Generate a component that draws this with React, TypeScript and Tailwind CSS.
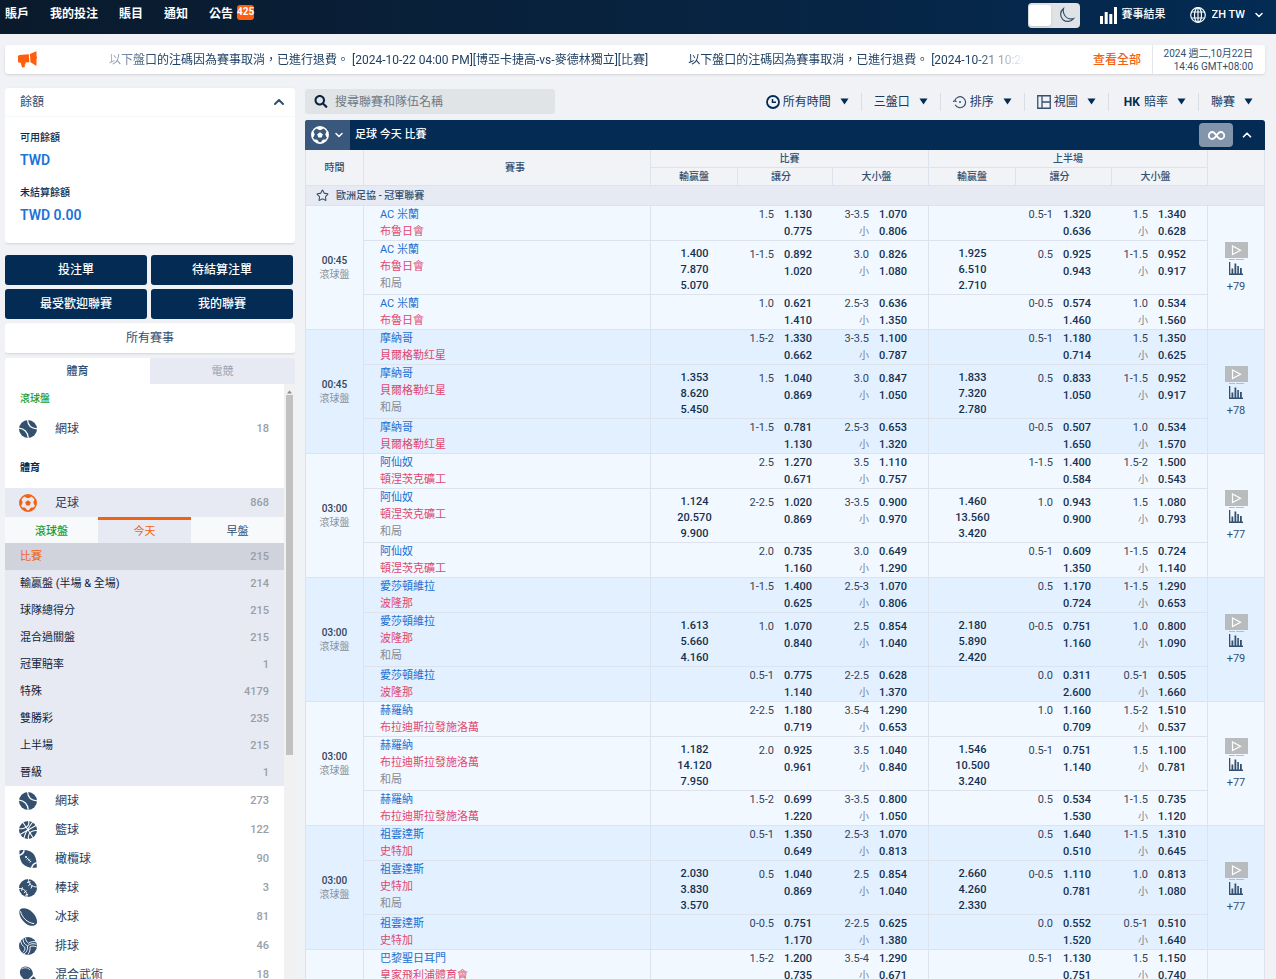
import type { ReactNode } from 'react';
import { FaSearch } from 'react-icons/fa';
import { ChevronDown, ChevronUp, Star } from 'lucide-react';

// [line, upper price, lower price]
type Market = [string, string, string];

interface Match {
  time?: string;
  more?: string;
  home: string;
  away: string;
  full?: string[];
  half?: string[];
  // each line: full handicap, full total, half handicap, half total
  lines: Market[][];
}

const matches: Match[] = [
  {
    time: '00:45',
    more: '+79',
    home: 'AC 米蘭',
    away: '布魯日會',
    full: ['1.400', '7.870', '5.070'],
    half: ['1.925', '6.510', '2.710'],
    lines: [
      [['1.5', '1.130', '0.775'], ['3-3.5', '1.070', '0.806'], ['0.5-1', '1.320', '0.636'], ['1.5', '1.340', '0.628']],
      [['1-1.5', '0.892', '1.020'], ['3.0', '0.826', '1.080'], ['0.5', '0.925', '0.943'], ['1-1.5', '0.952', '0.917']],
      [['1.0', '0.621', '1.410'], ['2.5-3', '0.636', '1.350'], ['0-0.5', '0.574', '1.460'], ['1.0', '0.534', '1.560']],
    ],
  },
  {
    time: '00:45',
    more: '+78',
    home: '摩納哥',
    away: '貝爾格勒红星',
    full: ['1.353', '8.620', '5.450'],
    half: ['1.833', '7.320', '2.780'],
    lines: [
      [['1.5-2', '1.330', '0.662'], ['3-3.5', '1.100', '0.787'], ['0.5-1', '1.180', '0.714'], ['1.5', '1.350', '0.625']],
      [['1.5', '1.040', '0.869'], ['3.0', '0.847', '1.050'], ['0.5', '0.833', '1.050'], ['1-1.5', '0.952', '0.917']],
      [['1-1.5', '0.781', '1.130'], ['2.5-3', '0.653', '1.320'], ['0-0.5', '0.507', '1.650'], ['1.0', '0.534', '1.570']],
    ],
  },
  {
    time: '03:00',
    more: '+77',
    home: '阿仙奴',
    away: '頓涅茨克礦工',
    full: ['1.124', '20.570', '9.900'],
    half: ['1.460', '13.560', '3.420'],
    lines: [
      [['2.5', '1.270', '0.671'], ['3.5', '1.110', '0.757'], ['1-1.5', '1.400', '0.584'], ['1.5-2', '1.500', '0.543']],
      [['2-2.5', '1.020', '0.869'], ['3-3.5', '0.900', '0.970'], ['1.0', '0.943', '0.900'], ['1.5', '1.080', '0.793']],
      [['2.0', '0.735', '1.160'], ['3.0', '0.649', '1.290'], ['0.5-1', '0.609', '1.350'], ['1-1.5', '0.724', '1.140']],
    ],
  },
  {
    time: '03:00',
    more: '+79',
    home: '愛莎頓維拉',
    away: '波隆那',
    full: ['1.613', '5.660', '4.160'],
    half: ['2.180', '5.890', '2.420'],
    lines: [
      [['1-1.5', '1.400', '0.625'], ['2.5-3', '1.070', '0.806'], ['0.5', '1.170', '0.724'], ['1-1.5', '1.290', '0.653']],
      [['1.0', '1.070', '0.840'], ['2.5', '0.854', '1.040'], ['0-0.5', '0.751', '1.160'], ['1.0', '0.800', '1.090']],
      [['0.5-1', '0.775', '1.140'], ['2-2.5', '0.628', '1.370'], ['0.0', '0.311', '2.600'], ['0.5-1', '0.505', '1.660']],
    ],
  },
  {
    time: '03:00',
    more: '+77',
    home: '赫羅納',
    away: '布拉迪斯拉發施洛萬',
    full: ['1.182', '14.120', '7.950'],
    half: ['1.546', '10.500', '3.240'],
    lines: [
      [['2-2.5', '1.180', '0.719'], ['3.5-4', '1.290', '0.653'], ['1.0', '1.160', '0.709'], ['1.5-2', '1.510', '0.537']],
      [['2.0', '0.925', '0.961'], ['3.5', '1.040', '0.840'], ['0.5-1', '0.751', '1.140'], ['1.5', '1.100', '0.781']],
      [['1.5-2', '0.699', '1.220'], ['3-3.5', '0.800', '1.050'], ['0.5', '0.534', '1.530'], ['1-1.5', '0.735', '1.120']],
    ],
  },
  {
    time: '03:00',
    more: '+77',
    home: '祖雲達斯',
    away: '史特加',
    full: ['2.030', '3.830', '3.570'],
    half: ['2.660', '4.260', '2.330'],
    lines: [
      [['0.5-1', '1.350', '0.649'], ['2.5-3', '1.070', '0.813'], ['0.5', '1.640', '0.510'], ['1-1.5', '1.310', '0.645']],
      [['0.5', '1.040', '0.869'], ['2.5', '0.854', '1.040'], ['0-0.5', '1.110', '0.781'], ['1.0', '0.813', '1.080']],
      [['0-0.5', '0.751', '1.170'], ['2-2.5', '0.625', '1.380'], ['0.0', '0.552', '1.520'], ['0.5-1', '0.510', '1.640']],
    ],
  },
  {
    home: '巴黎聖日耳門',
    away: '皇家飛利浦體育會',
    lines: [
      [['1.5-2', '1.200', '0.735'], ['3.5-4', '1.290', '0.671'], ['0.5-1', '1.130', '0.751'], ['1.5', '1.150', '0.740']],
    ],
  },
];

const betTypes = [
  { name: '比賽', count: 215, active: true },
  { name: '輸贏盤 (半場 & 全場)', count: 214 },
  { name: '球隊總得分', count: 215 },
  { name: '混合過關盤', count: 215 },
  { name: '冠軍賠率', count: 1 },
  { name: '特殊', count: 4179 },
  { name: '雙勝彩', count: 235 },
  { name: '上半場', count: 215 },
  { name: '晉級', count: 1 },
];

function FootballIcon() {
  return (
    <svg className="h-[18px] w-[18px] shrink-0" viewBox="0 0 18 18" fill="currentColor" aria-hidden="true">
      <circle cx="9" cy="9" r="8.1" fill="none" stroke="currentColor" strokeWidth="1.6" />
      <path d="M9 6.200l2.800 2-1.100 3.200H7.300L6.200 8.200z" />
      <path d="M5.600 1.200h6.800L11.600 3.300 9 4.200 6.400 3.300zM17.200 5.600v6l-2-.9-.9-2.400 1.100-2.200zM15.200 14.600l-5 2.800.3-2.500 1.900-1.500 2.300.2zM2.800 14.600l5 2.800-.3-2.500-1.900-1.500-2.300.2zM.8 5.600v6l2-.9.9-2.400-1.100-2.200z" />
    </svg>
  );
}

function TennisIcon() {
  return (
    <svg className="h-[18px] w-[18px] shrink-0" viewBox="0 0 18 18" aria-hidden="true">
      <circle cx="9" cy="9" r="9" fill="#33506f" />
      <g fill="none" stroke="#fff" strokeWidth="1.2">
        <path d="M8.600 0c.2 4.600 3.200 8.400 9.400 8.800" />
        <path d="M0 8.200c5 .3 9 4 9.300 9.800" />
      </g>
    </svg>
  );
}

function BasketballIcon() {
  return (
    <svg className="h-[18px] w-[18px] shrink-0" viewBox="0 0 18 18" aria-hidden="true">
      <circle cx="9" cy="9" r="9" fill="#33506f" />
      <g fill="none" stroke="#fff" strokeWidth="1.1">
        <path d="M4 1.500l10 15M1 13.500l16-9" />
        <path d="M9.500 0c1.500 4-1.500 7.500-9.500 7.800M18 9.500c-5.500-.5-9.500 2.500-8.500 8.500" />
        <path d="M13.500 1.200C11 5 6 11 5 17.200" />
      </g>
    </svg>
  );
}

function RugbyIcon() {
  return (
    <svg className="h-[18px] w-[18px] shrink-0" viewBox="0 0 18 18" aria-hidden="true">
      <path d="M.5.500C7-.8 12.500 1 15.300 5c1.900 3 2.500 7.500 2.500 12.500C11 18.300 6 17 3 13 .8 9.500.3 5 .5.500z" fill="#33506f" />
      <g fill="none" stroke="#fff">
        <path d="M.2 5.300C2.500 4.800 4.500 3 5.200.3M12.600 18c.6-3 2.400-4.800 5.200-5.300" strokeWidth="1.500" />
        <path d="M6 6l6 6M6 8l2-2M7.600 9.600l2-2M9.200 11.200l2-2M10.600 12.600l1.600-1.600" strokeWidth=".8" />
      </g>
    </svg>
  );
}

function BaseballIcon() {
  return (
    <svg className="h-[18px] w-[18px] shrink-0" viewBox="0 0 18 18" aria-hidden="true">
      <circle cx="9" cy="9" r="9" fill="#33506f" />
      <g fill="none" stroke="#fff">
        <path d="M9.500 0c-.3 4.500 3 8 8.500 8M0 9.500c5-.5 8.500 3.500 8 8.500" strokeWidth=".9" />
        <path d="M8 3.500l3.500-.8M9.300 6.800l2.600-2.200M12 9.500l1.200-3.200M2.600 11.800l.8-3.500M5 14l2.300-2.600M6.200 16.400l3-1.200" strokeWidth="1" />
      </g>
    </svg>
  );
}

function PuckIcon() {
  return (
    <svg className="h-[18px] w-[18px] shrink-0" viewBox="0 0 18 18" aria-hidden="true">
      <path d="M1 1.500C4-.8 9.500.5 13.500 4.500c3.500 3.500 5.500 8 4 11.500-2 2.500-7 2.500-11-.8C2 11.500-1 6 1 1.500z" fill="#33506f" />
      <path d="M1.500 3.200c1.200 6 6.800 11.800 13.700 12.400" fill="none" stroke="#fff" strokeWidth="1" />
    </svg>
  );
}

function VolleyballIcon() {
  return (
    <svg className="h-[18px] w-[18px] shrink-0" viewBox="0 0 18 18" aria-hidden="true">
      <circle cx="9" cy="9" r="9" fill="#33506f" />
      <g fill="none" stroke="#fff" strokeWidth=".9">
        <path d="M8.500 8.800C5.500 7.500 4 5 4 1.800M8.500 8.800c2.500-2.200 5.800-2.600 8.900-1.600M8.500 8.800c.6 3.500-.8 6.500-3.700 8.200" />
        <path d="M6.500 1c.2 2.500 1.200 4 3 5.200C12 4.600 14.500 4.200 17 4.800" />
        <path d="M17.800 10c-2.700-1.200-4.800-1.200-6.800-.3.300 3-.4 5.600-2.200 8" />
        <path d="M1.700 4c.5 3 2 5.200 4.300 6.500.1 2.200-.8 4-2.600 5.300" />
      </g>
    </svg>
  );
}

function GloveIcon() {
  return (
    <svg className="h-[18px] w-[18px] shrink-0" viewBox="0 0 18 18" aria-hidden="true">
      <path d="M3 1.500C6-.3 10 .3 12 3c1.800 2.300 2 4 1.700 6L8.500 14C6 14 4 13 3 11 .5 9 0 4 3 1.500z" fill="#33506f" />
      <path d="M2.500 3c3-2 6.500-1.500 8.500 1" fill="none" stroke="#fff" strokeWidth=".8" />
      <path d="M14.600 10.200l3 3.600-4 3.600-3.600-3.100z" fill="#33506f" />
    </svg>
  );
}

const sports = [
  { name: '網球', count: 273, Icon: TennisIcon },
  { name: '籃球', count: 122, Icon: BasketballIcon },
  { name: '橄欖球', count: 90, Icon: RugbyIcon },
  { name: '棒球', count: 3, Icon: BaseballIcon },
  { name: '冰球', count: 81, Icon: PuckIcon },
  { name: '排球', count: 46, Icon: VolleyballIcon },
  { name: '混合武術', count: 18, Icon: GloveIcon },
];

function Header() {
  return (
    <header className="flex h-[34px] shrink-0 items-start justify-between bg-linear-to-r from-[#0a1a2c] to-[#032b53] pr-[11px] pl-[5px] text-xs font-bold text-white">
      <nav className="flex h-7 items-center gap-[21px]">
        <a href="#account">賬戶</a>
        <a href="#bets">我的投注</a>
        <a href="#statement">賬目</a>
        <a href="#messages">通知</a>
        <a href="#news" className="flex items-center gap-1">
          公告
          <span className="mb-1 flex h-[15px] items-center rounded-[3px] bg-[#ff5e0e] text-[10px]">425</span>
        </a>
      </nav>
      <div className="flex h-[30px] items-center">
        <label className="mr-5 flex h-[25px] w-[52px] cursor-pointer items-center justify-between rounded bg-[#dfe3e6] pr-[5px] pl-px">
          <input type="checkbox" className="peer sr-only" aria-label="深色模式" />
          <span className="h-[21px] w-[22px] rounded-[3px] bg-white shadow" />
          <svg className="h-4 w-4" viewBox="0 0 16 16" fill="none" stroke="#33506f" strokeWidth="1.200" aria-hidden="true">
            <path d="M4.500 1.500C.8 4.300.8 9.800 4 12.700c3.200 2.700 8.300 2.300 10.700-1.200-3.400 1-6.900-.2-8.900-3C4.300 6.400 3.900 4 4.500 1.500z" />
          </svg>
        </label>
        <a href="#results" className="mr-6 flex items-center gap-[5px] text-[11px] font-medium">
          <svg className="h-[17px] w-[17px]" viewBox="0 0 17 17" fill="currentColor" aria-hidden="true">
            <path d="M0 9h3v8H0zM4.700 5h3v12h-3zM9.300 7h3v10h-3zM14 0h3v17h-3z" />
          </svg>
          賽事結果
        </a>
        <label className="flex items-center">
          <svg className="mr-1.5 h-4 w-4" viewBox="0 0 16 16" fill="none" stroke="currentColor" strokeWidth="1.200" aria-hidden="true">
            <circle cx="8" cy="8" r="7.300" />
            <ellipse cx="8" cy="8" rx="3.500" ry="7.300" />
            <path d="M8 .7v14.600M1.600 5h12.800M1.600 11h12.800" />
          </svg>
          <select className="appearance-none field-sizing-content text-[11px] font-medium" aria-label="語言">
            <option>ZH TW</option>
          </select>
          <ChevronDown className="ml-2 h-3 w-3" strokeWidth={3} />
        </label>
      </div>
    </header>
  );
}

function Announcements() {
  return (
    <section className="mt-[11px] mr-[11px] ml-[5px] flex h-[29px] shrink-0 items-center rounded-[3px] bg-white shadow-sm">
      <svg className="mx-[13px] h-[17px] w-[19px] shrink-0" viewBox="0 0 19 17" fill="#ff5e0e" aria-hidden="true">
        <path d="M17.800.4c.4-.2.700 0 .7.400v4.500c.7.300.8 2 0 2.400v6.500c0 .5-.4.600-.8.400l-5.200-3.300-.6-8.200zM10.800 3.200l.5 8-3.900.2.300 1.900-1.100.3.300 1.900c0 .5-.4.700-.9.800l-1.300.3c-.5.100-.7-.2-.8-.6l-1.200-4.300-1.700-.1C.4 11.600 0 11 0 10.300V6C0 4.900.5 4.200 1.500 4.100z" />
      </svg>
      <div className="ml-[59px] flex flex-1 gap-10 overflow-hidden text-xs whitespace-nowrap text-[#1f4064] [mask-image:linear-gradient(to_right,rgba(0,0,0,0.4),black_50px,black_calc(100%-50px),transparent)]">
        <span>以下盤口的注碼因為賽事取消，已進行退費。 [2024-10-22 04:00 PM][博亞卡捷高-vs-麥德林獨立][比賽]</span>
        <span>以下盤口的注碼因為賽事取消，已進行退費。 [2024-10-21 10:20 PM]</span>
      </div>
      <a href="#all" className="mr-[11px] ml-[68px] text-xs font-medium text-[#f2610f]">
        查看全部
      </a>
      <time className="flex h-full w-[113px] flex-col justify-center border-l border-[#e3e6ec] pt-px pr-3 text-right text-[10px] leading-[13px] text-[#33506f]">
        <span>2024 週二,10月22日</span>
        <span>14:46 GMT+08:00</span>
      </time>
    </section>
  );
}

function BalanceCard() {
  return (
    <section className="h-[155px] shrink-0 rounded-[3px] bg-white shadow">
      <div className="flex h-[29px] items-center justify-between border-b border-[#f7f8fa] pr-2 pl-[15px]">
        <h2 className="text-xs text-[#33506f]">餘額</h2>
        <button type="button" aria-label="收起餘額">
          <ChevronUp className="h-4 w-4 text-[#33506f]" strokeWidth={3} />
        </button>
      </div>
      <dl className="px-[15px] pt-3">
        <dt className="text-[10px] leading-[18px] font-medium text-[#032b53]">可用餘額</dt>
        <dd className="mb-[11px] text-sm leading-[26px] font-semibold text-[#1c74d9]">TWD</dd>
        <dt className="text-[10px] leading-[18px] font-medium text-[#032b53]">未結算餘額</dt>
        <dd className="text-sm leading-[26px] font-semibold text-[#1c74d9]">TWD 0.00</dd>
      </dl>
    </section>
  );
}

function SportRow({ name, count, children, active = false }: { name: string; count: number; children: ReactNode; active?: boolean }) {
  return (
    <a
      href="#sport"
      className={`flex h-[29px] items-center pr-[15px] pl-[14px] ${active ? 'bg-[#e7eaf3] text-[#f2610f]' : ''}`}
    >
      {children}
      <span className="ml-[18px] flex-1 text-xs text-[#1f4064]">{name}</span>
      <span className="pt-px text-[11px] font-medium text-[#989ea6]">{count}</span>
    </a>
  );
}

function Sidebar() {
  return (
    <aside className="flex w-[290px] shrink-0 flex-col overflow-hidden pt-[14px]">
      <BalanceCard />
      <div className="mt-3 mr-0.5 grid shrink-0 grid-cols-2 gap-1">
        {['投注單', '待結算注單', '最受歡迎聯賽', '我的聯賽'].map((name) => (
          <button key={name} type="button" className="h-[30px] rounded-[3px] bg-[#032b53] text-xs font-medium text-white">
            {name}
          </button>
        ))}
      </div>
      <button type="button" className="mt-1 h-[30px] shrink-0 rounded-[3px] bg-white text-xs text-[#33506f] shadow">
        所有賽事
      </button>
      <div className="mt-[5px] grid h-[26px] shrink-0 grid-cols-2 overflow-hidden rounded-t-[3px] text-[11px]">
        <button type="button" className="bg-white pt-0.5 font-medium text-[#33506f]">體育</button>
        <button type="button" className="bg-[#e7eaf3] pt-0.5 text-[#98a2b0]">電競</button>
      </div>

      <div className="flex min-h-0 flex-1">
        <div className="min-w-0 flex-1 overflow-hidden bg-white">
          <h3 className="h-[30px] px-[15px] text-[10px] leading-[30px] font-medium text-[#1c9c2c]">滾球盤</h3>
          <SportRow name="網球" count={18}>
            <TennisIcon />
          </SportRow>
          <h3 className="h-[45px] px-[15px] text-[10px] leading-[50px] font-bold text-[#032b53]">體育</h3>
          <SportRow name="足球" count={868} active>
            <FootballIcon />
          </SportRow>
          <div className="grid h-[26px] grid-cols-3 bg-[#f7f9fb] text-[11px]">
            <button type="button" className="pt-1 font-medium text-[#1c9c2c]">滾球盤</button>
            <button type="button" className="border-t-[3px] border-[#f2610f] bg-[#e7eaf3] pt-0.5 text-[#f2610f]">今天</button>
            <button type="button" className="pt-1 text-[#33506f]">早盤</button>
          </div>
          <ul className="bg-[#e7eaf3] text-[11px]">
            {betTypes.map((item) => (
              <li key={item.name}>
                <a
                  href="#type"
                  className={`flex h-[27px] items-center justify-between px-[15px] pt-0.5 ${item.active ? 'bg-[#d0d3dc] text-[#f2610f]' : 'text-[#0f2238]'}`}
                >
                  {item.name}
                  <span className="font-medium text-[#989ea6]">{item.count}</span>
                </a>
              </li>
            ))}
          </ul>
          {sports.map(({ name, count, Icon }) => (
            <SportRow key={name} name={name} count={count}>
              <Icon />
            </SportRow>
          ))}
        </div>
        {/* scrollbar */}
        <div className="flex w-[11px] flex-col items-center bg-[#f1f1f1] pt-[5px]">
          <svg className="h-[6px] w-[5px]" viewBox="0 0 5 6" aria-hidden="true">
            <path d="M0 4.500L2.500 1.500 5 4.500z" fill="#8a8a8a" />
          </svg>
          <div className="h-[61%] w-[7px] bg-[#c1c1c1]" />
        </div>
      </div>
    </aside>
  );
}

function Filter({ label, children }: { label: string; children?: ReactNode }) {
  return (
    <label className="flex h-[18px] items-center border-l border-[#d9dde4] px-3 first:border-l-0">
      {children}
      <select className="appearance-none field-sizing-content" aria-label={label}>
        <option>{label}</option>
      </select>
      <svg className="ml-[9px] h-[7px] w-[9px]" viewBox="0 0 9 7" fill="#032b53" aria-hidden="true">
        <path d="M.5.5h8L4.500 6.500z" />
      </svg>
    </label>
  );
}

function Toolbar() {
  return (
    <div className="mb-[6px] flex h-[25px] shrink-0 items-center justify-between">
      <label className="flex h-full w-[250px] items-center rounded-[3px] bg-[#e0e4e7] px-[9px]">
        <FaSearch className="mr-[7px] h-[13px] w-[14px] text-[#0b2340]" aria-hidden="true" />
        <input
          type="search"
          placeholder="搜尋聯賽和隊伍名稱"
          aria-label="搜尋聯賽和隊伍名稱"
          className="min-w-0 flex-1 text-xs outline-none placeholder:text-[#6f7881]"
        />
      </label>
      <div className="flex text-xs text-[#1b3a5c]">
        <Filter label="所有時間">
          <svg className="mr-[3px] h-[14px] w-[14px]" viewBox="0 0 14 14" fill="none" stroke="#032b53" strokeWidth="1.800" aria-hidden="true">
            <circle cx="7" cy="7" r="6" />
            <path d="M6.500 4V7.300H10" strokeWidth="1.500" />
          </svg>
        </Filter>
        <Filter label="三盤口" />
        <Filter label="排序">
          <svg className="mr-[3px] h-[14px] w-[14px]" viewBox="0 0 14 14" fill="none" stroke="#33506f" strokeWidth="1.200" aria-hidden="true">
            <path d="M1.700 6A5.500 5.500 0 1 1 2.200 9.800M0 6.800l1.700-1 1.900 1" />
            <circle cx="7" cy="7" r="1" fill="#33506f" stroke="none" />
          </svg>
        </Filter>
        <Filter label="視圖">
          <svg className="mr-[3px] h-[14px] w-[14px]" viewBox="0 0 14 14" fill="none" stroke="#33506f" strokeWidth="1.300" aria-hidden="true">
            <path d="M.75.75h12.500v12.500H.75zM5 .75v12.500M5 7h8" />
          </svg>
        </Filter>
        <Filter label="賠率">
          <span className="mr-1 ml-[3px] font-bold text-[#032b53]">HK</span>
        </Filter>
        <Filter label="聯賽" />
      </div>
    </div>
  );
}

function WinCell({ prices }: { prices?: string[] }) {
  return (
    <td className="pt-[5px] text-center leading-4 font-medium text-[#15304f]">
      {prices?.map((price) => (
        <button key={price} type="button" className="mx-auto block">{price}</button>
      ))}
    </td>
  );
}

function MarketCell({ market, total = false, padded }: { market: Market; total?: boolean; padded: boolean }) {
  const [line, upper, lower] = market;
  return (
    <td className={`pr-5 leading-[17px] text-[#33445a] ${padded ? 'pt-[5px]' : ''} ${total ? 'border-r' : ''}`}>
      <div className="flex justify-end gap-[10px]">
        <span>{line}</span>
        <button type="button" className="w-[29px] text-left font-medium text-[#15304f]">{upper}</button>
      </div>
      <div className="flex justify-end gap-[10px]">
        {total && <span className="text-[10px] text-[#77818d]">小</span>}
        <button type="button" className="w-[29px] text-left font-medium text-[#15304f]">{lower}</button>
      </div>
    </td>
  );
}

function MatchRows({ match, shaded }: { match: Match; shaded: boolean }) {
  const span = match.lines.length;
  return (
    <tbody className={shaded ? 'bg-[#e3f0ff]' : 'bg-[#f2f8ff]'}>
      {match.lines.map((line, i) => {
        const main = i === 1;
        return (
          <tr key={i} className={`align-top [&>td]:border-b [&>td]:border-[#dde3ec] ${main ? 'h-[54px]' : 'h-[35px]'}`}>
            {i === 0 && (
              <td rowSpan={span} className="border-r border-l text-center align-middle text-[10px] leading-[14px]">
                <div className="font-medium text-[#33445a]">{match.time}</div>
                {match.time && <div className="text-[#8a8f96]">滾球盤</div>}
              </td>
            )}
            <td className="border-r pl-4 leading-[17px]">
              <div className="text-[#1a6fd0]">{match.home}</div>
              <div className="text-[#e0476f]">{match.away}</div>
              {main && <div className="text-[#858b92]">和局</div>}
            </td>
            <WinCell prices={main ? match.full : undefined} />
            <MarketCell market={line[0]} padded={main} />
            <MarketCell market={line[1]} padded={main} total />
            <WinCell prices={main ? match.half : undefined} />
            <MarketCell market={line[2]} padded={main} />
            <MarketCell market={line[3]} padded={main} total />
            {i === 0 && (
              <td rowSpan={span} className="border-r align-middle">
                {match.more && (
                  <div className="flex flex-col items-center text-[#33506f]">
                    <svg className="h-[18px] w-[23px]" viewBox="0 0 23 18" aria-hidden="true">
                      <path d="M0 0h23v16H0z" fill="#b9bcbf" />
                      <path d="M7.500 4v8.500l8-4.250z" fill="none" stroke="#fff" strokeWidth="1.200" />
                      <path d="M4 17.500h6M11 17.500h8" stroke="#b9bcbf" />
                    </svg>
                    <svg className="mt-0.5 h-[13px] w-[14px]" viewBox="0 0 14 13" fill="currentColor" aria-hidden="true">
                      <path d="M0 0h1.300v11.500H14V13H0zM2.500 6.500h1.800V12H2.500zM5.500 1.500h1.800V12H5.500zM8.300 4h1.600v8H8.300zM11 6h1.800v6H11z" />
                    </svg>
                    <a href="#more" className="mt-[5px] leading-[14px]">{match.more}</a>
                  </div>
                )}
              </td>
            )}
          </tr>
        );
      })}
    </tbody>
  );
}

function OddsTable() {
  return (
    <table className="w-full table-fixed border-separate border-spacing-0 text-[11px]">
      <colgroup>
        <col className="w-[59px]" />
        <col />
        <col className="w-[87px]" />
        <col className="w-[95px]" />
        <col className="w-24" />
        <col className="w-[87px]" />
        <col className="w-24" />
        <col className="w-24" />
        <col className="w-[57px]" />
      </colgroup>
      <thead className="bg-[#f1f3f7] text-[10px] leading-4 text-[#33506f] [&_th]:border-r [&_th]:border-b [&_th]:border-[#dde3ec] [&_th]:font-medium">
        <tr className="h-[18px]">
          <th rowSpan={2} className="border-l">時間</th>
          <th rowSpan={2} className="pl-4">賽事</th>
          <th colSpan={3}>比賽</th>
          <th colSpan={3}>上半場</th>
          <th rowSpan={2} aria-label="更多" />
        </tr>
        <tr className="h-[18px]">
          <th>輸贏盤</th>
          <th className="pr-2">讓分</th>
          <th className="pr-2">大小盤</th>
          <th>輸贏盤</th>
          <th className="pr-2">讓分</th>
          <th className="pr-2">大小盤</th>
        </tr>
        <tr className="h-5 bg-[#e7eaf3]">
          <th colSpan={9} className="border-l pl-[10px]">
            <div className="flex items-center gap-[7px]">
              <Star className="h-[13px] w-[13px]" strokeWidth={2} />
              歐洲足協 - 冠軍聯賽
            </div>
          </th>
        </tr>
      </thead>
      {matches.map((match, index) => (
        <MatchRows key={match.home} match={match} shaded={index % 2 === 1} />
      ))}
    </table>
  );
}

export default function App() {
  return (
    <div
      lang="zh-Hant"
      className="flex h-screen flex-col overflow-hidden bg-[#f1f2f6] font-[Roboto,'Noto_Sans_CJK_TC',sans-serif]"
    >
      <Header />
      <Announcements />
      <div className="flex min-h-0 flex-1 gap-[10px] pr-[11px] pl-[5px]">
        <Sidebar />
        <main className="flex min-w-0 flex-1 flex-col overflow-hidden pt-[15px]">
          <Toolbar />
          <div className="flex h-[30px] shrink-0 items-center overflow-hidden rounded-t-[3px] bg-[#032b53] text-white">
            <button type="button" aria-label="選擇運動" className="flex h-full w-[45px] items-center gap-1 bg-[#39587b] pl-[6px]">
              <FootballIcon />
              <ChevronDown className="h-3 w-3" strokeWidth={3} />
            </button>
            <h1 className="ml-[5px] flex-1 text-[11px] font-medium">足球 今天 比賽</h1>
            <button type="button" aria-label="全部展開" className="mr-[7px] flex h-6 w-[34px] items-center justify-center rounded bg-[#8395ab]">
              <svg className="h-[9px] w-[17px]" viewBox="0 0 17 9" fill="none" stroke="currentColor" strokeWidth="1.800" aria-hidden="true">
                <path d="M8.500 4.500C7 2.300 6 1 4.300 1a3.500 3.500 0 0 0 0 7C6 8 7 6.700 8.500 4.500S11 1 12.700 1a3.500 3.500 0 0 1 0 7C11 8 10 6.700 8.500 4.500z" />
              </svg>
            </button>
            <button type="button" aria-label="收起" className="mr-[11px]">
              <ChevronUp className="h-[14px] w-[14px]" strokeWidth={3} />
            </button>
          </div>
          <OddsTable />
        </main>
      </div>
    </div>
  );
}
